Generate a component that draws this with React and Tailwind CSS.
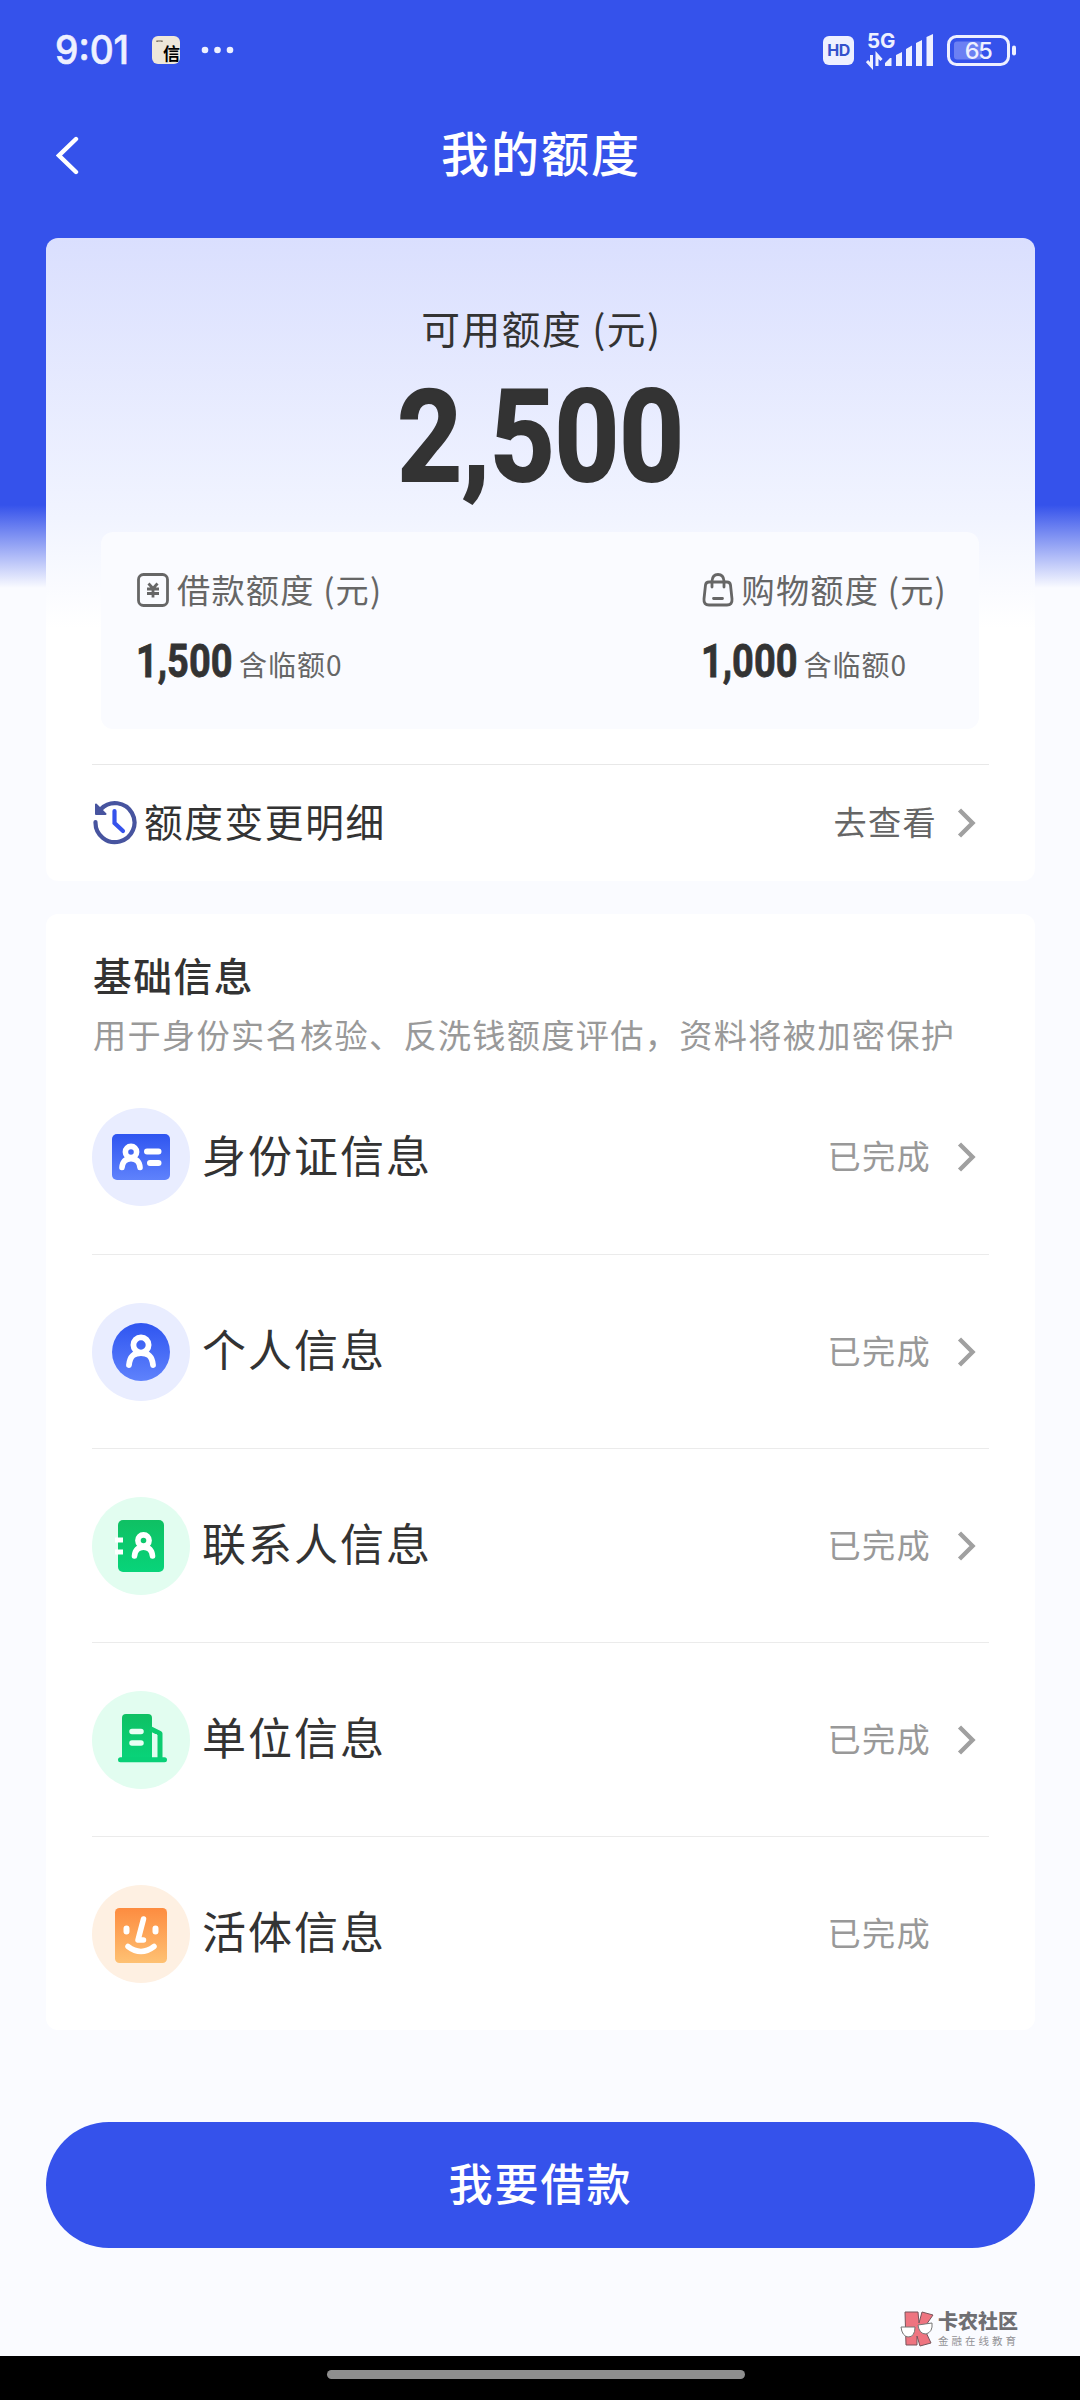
import React from "react";

const Chevron = () => (
  <svg width="24" height="36" viewBox="0 0 24 36" className="shrink-0" fill="none" stroke="#a0a0a0" strokeWidth="4.400">
    <path d="M4.500 5 L17.500 18 L4.500 31" />
  </svg>
);

const Num = ({ children }) => (
  <span className="inline-block origin-left scale-x-[0.825] text-[46px] font-bold leading-[54px] text-[#333] [-webkit-text-stroke:0.8px_#333]">
    {children}
  </span>
);

const Person = () => (
  <g fill="none" stroke="#fff" strokeWidth="5.800" strokeLinecap="round">
    <circle cx="0" cy="-7" r="7.6" />
    <path d="M-12 13 C-11 3 -6 1 0 1 C6 1 11 3 12 13" />
  </g>
);

const SmallPerson = () => (
  <g fill="none" stroke="#fff" strokeWidth="5.600" strokeLinecap="round">
    <circle cx="0" cy="-6" r="5.600" />
    <path d="M-9 9.500 C-8.500 3.500 -5 .8 0 .8 C5 .8 8.500 3.500 9 9.500" />
  </g>
);

const IdIcon = () => (
  <svg width="98" height="98" viewBox="0 0 98 98">
    <defs>
      <linearGradient id="blueA" x1="0" y1="0" x2="0" y2="1">
        <stop offset="0" stopColor="#2f55f0" />
        <stop offset="1" stopColor="#5f82fc" />
      </linearGradient>
    </defs>
    <circle cx="49" cy="49" r="49" fill="#e9edff" />
    <rect x="20" y="26" width="58" height="46" rx="5" fill="url(#blueA)" />
    <g transform="translate(39 50)">
      <SmallPerson />
    </g>
    <path d="M55 43.500H66.500M58 55H66.500" stroke="#fff" strokeWidth="6" strokeLinecap="round" />
  </svg>
);

const UserIcon = () => (
  <svg width="98" height="98" viewBox="0 0 98 98">
    <circle cx="49" cy="49" r="49" fill="#e9edff" />
    <circle cx="49" cy="49" r="29" fill="url(#blueA)" />
    <g transform="translate(49 49)">
      <Person />
    </g>
  </svg>
);

const ContactIcon = () => (
  <svg width="98" height="98" viewBox="0 0 98 98">
    <defs>
      <linearGradient id="greenA" x1="0" y1="0" x2="0" y2="1">
        <stop offset="0" stopColor="#0fc063" />
        <stop offset="1" stopColor="#08d47a" />
      </linearGradient>
    </defs>
    <circle cx="49" cy="49" r="49" fill="#e2fdf0" />
    <rect x="26" y="23" width="46" height="52" rx="5" fill="url(#greenA)" />
    <path d="M23 43H31M23 55H31" stroke="#fff" strokeWidth="5" />
    <g transform="translate(51.500 49.500)">
      <SmallPerson />
    </g>
  </svg>
);

const CompanyIcon = () => (
  <svg width="98" height="98" viewBox="0 0 98 98">
    <circle cx="49" cy="49" r="49" fill="#e2fdf0" />
    <path d="M30 69V27a4 4 0 0 1 4-4H56a4 4 0 0 1 4 4V69Z" fill="url(#greenA)" />
    <path d="M58 37.500 L68 42.500V69" fill="none" stroke="#0ccc70" strokeWidth="5" strokeLinejoin="round" />
    <path d="M28.500 68.800H72.500" stroke="#08d077" strokeWidth="5" strokeLinecap="round" />
    <path d="M40 40.500H49M40 52H49" stroke="#e9fff4" strokeWidth="5.500" strokeLinecap="round" />
    <path d="M62.500 43V66" stroke="#e2fdf0" strokeWidth="4.500" />
  </svg>
);

const FaceIcon = () => (
  <svg width="98" height="98" viewBox="0 0 98 98">
    <defs>
      <linearGradient id="orangeA" x1="0" y1="0" x2="0" y2="1">
        <stop offset="0" stopColor="#fd8c40" />
        <stop offset="1" stopColor="#fec173" />
      </linearGradient>
    </defs>
    <circle cx="49" cy="49" r="49" fill="#fef0e2" />
    <rect x="23" y="23" width="52" height="55" rx="4.500" fill="url(#orangeA)" />
    <g fill="none" stroke="#fff" strokeLinecap="round" strokeLinejoin="round">
      <path d="M34.500 43.500V46.500M63.500 43.500V46.500" strokeWidth="6" />
      <path d="M51.500 34 L46 55H51.500" strokeWidth="5.500" />
      <path d="M36 61.500 Q49 71.500 62 61.500" strokeWidth="5.500" />
    </g>
  </svg>
);

const rows = [
  ["身份证信息", IdIcon, true],
  ["个人信息", UserIcon, true],
  ["联系人信息", ContactIcon, true],
  ["单位信息", CompanyIcon, true],
  ["活体信息", FaceIcon, false],
];

const StatusBar = () => (
  <div className="flex h-[100px] items-center justify-between pl-[55px] pr-[64px] text-[#eef0ff]">
    <div className="flex items-center">
      <div className="w-[77px]">
        <span className="inline-block origin-left scale-x-[0.94] whitespace-nowrap font-['Inter',sans-serif] text-[39.500px] font-medium leading-[50px] [-webkit-text-stroke:0.6px_#eef0ff]">9:01</span>
      </div>
      <div className="ml-5 flex h-[28px] w-[28px] flex-col overflow-hidden rounded-md bg-[#eee7da]">
        <svg width="28" height="6" viewBox="0 0 28 6" fill="none" stroke="#665c50" strokeWidth="1.200">
          <path d="M5 9V5H10V9" />
        </svg>
        <span className="self-end text-[17px] font-bold leading-[21px] text-black">信</span>
      </div>
      <svg width="34" height="8" viewBox="0 0 34 8" className="ml-[21px]" fill="#eef0ff">
        <circle cx="4" cy="4" r="3.300" />
        <circle cx="16.500" cy="4" r="3.300" />
        <circle cx="29" cy="4" r="3.300" />
      </svg>
    </div>
    <div className="flex items-center">
      <div className="flex h-[29px] w-[31px] items-center justify-center rounded-[6px] bg-[#eef0ff] font-['Inter',sans-serif] text-[16px] font-bold leading-5 tracking-[-0.500px] text-[#3552cb]">HD</div>
      <svg width="68" height="44" viewBox="0 -4 68 44" className="mb-1 ml-3" fill="#eef0ff">
        <text x="1" y="18" fontSize="20.500" fontWeight="700" fontFamily="Inter">5G</text>
        <path d="M5.500 25V36L1 31M11 36V25L15.500 30" fill="none" stroke="#eef0ff" strokeWidth="3" />
        <path d="M19 36V33L24 28H25.500V36ZM30 36V25L36 22V36ZM40 36V19L46 15.500V36ZM50 36V13L56 10V36ZM60.500 36V7L67 4V36Z" />
      </svg>
      <svg width="70" height="32" viewBox="0 0 70 32" className="ml-3">
        <rect x="2.500" y="2.500" width="60" height="28" rx="8" fill="none" stroke="#eef0ff" strokeWidth="3" />
        <rect x="8" y="7.500" width="28" height="18" rx="3" fill="#6c80f3" />
        <rect x="66" y="11.500" width="4" height="10" rx="2" fill="#eef0ff" />
        <text x="32" y="25" textAnchor="middle" fill="#eef0ff" fontSize="23.500" letterSpacing="-1.500" fontWeight="500" fontFamily="Inter">65</text>
      </svg>
    </div>
  </div>
);

const YenIcon = () => (
  <svg width="32" height="34" viewBox="0 0 32 34" fill="none" stroke="#666" strokeWidth="2.800">
    <rect x="1.500" y="1.500" width="29" height="31" rx="5" />
    <path d="M11.500 10.500 L16 15.500L20.500 10.500M10 16H22M10 20.500H22M16 15V24.500" />
  </svg>
);

const BagIcon = () => (
  <svg width="32" height="34" viewBox="0 0 32 34" fill="none" stroke="#666" strokeWidth="2.800" strokeLinecap="round">
    <path d="M7 9H25Q28 9 28.500 12L30 26Q30.500 32 25 32H7Q1.500 32 2 26L3.500 12Q4 9 7 9Z" />
    <path d="M10 14V8Q10.500 1.500 16 1.500Q21.500 1.500 22 8V14M11.500 25.500H20.500" />
  </svg>
);

const Quota = ({ icon, label, value }) => (
  <div className="flex flex-col">
    <div className="flex h-[50px] items-center">
      {icon}
      <span className="mb-[3px] ml-2 whitespace-pre text-[33.200px] leading-[50px] tracking-[1.200px] text-[#666]">{label} (元)</span>
    </div>
    <div className="mt-[22px] flex h-[50px] items-center">
      <div className="-ml-px w-[103px] whitespace-nowrap pb-0.5 font-['Roboto']"><Num>{value}</Num></div>
      <span className="whitespace-nowrap pt-[4px] text-[28px] leading-[42px] tracking-[1px] text-[#666]">含临额0</span>
    </div>
  </div>
);

export default function App() {
  return (
    <div className="flex h-[2400px] w-[1080px] flex-col overflow-hidden bg-[#fafbff] bg-[linear-gradient(to_bottom,#3552eb_0px,#3552eb_505px,#fafbff_588px)] font-['Noto_Sans_CJK_SC',sans-serif] text-[#333]">
      <StatusBar />
      <header className="grid h-[138px] grid-cols-[100px_1fr_100px] items-start">
        <svg width="24" height="42" viewBox="0 0 24 42" className="ml-[56px] mt-[35px]" fill="none" stroke="#fff" strokeWidth="4.400" strokeLinecap="round">
          <path d="M20 4L3 20.500L20 37" />
        </svg>
        <h1 className="mt-[15px] pl-[2px] text-center text-[48px] font-medium leading-[72px] tracking-[2px] text-white">我的额度</h1>
      </header>

      <section className="ml-[46px] mr-[45px] h-[643px] shrink-0 rounded-xl bg-white bg-[linear-gradient(to_bottom,#dadffe_0px,#f1f4ff_280px,#ffffff_390px)] px-[46px]">
        <div className="flex h-[294px] flex-col items-center pt-[60px]">
          <div className="whitespace-pre pl-[2px] text-[38.700px] leading-[58px] tracking-[1.500px]">可用额度 (元)</div>
          <div className="mt-[16px] scale-x-[0.882] whitespace-nowrap font-['Roboto'] text-[128px] font-bold leading-[130px] [-webkit-text-stroke:2px_#333]">2,500</div>
        </div>
        <div className="ml-[9px] mr-[10px] flex h-[197px] justify-between rounded-xl bg-[#fafbff] pl-[36px] pr-[32px] pt-[33px]">
          <Quota icon={<YenIcon />} label="借款额度" value="1,500" />
          <Quota icon={<BagIcon />} label="购物额度" value="1,000" />
        </div>
        <div className="mt-[35px] flex h-[116px] items-center border-t border-[#e8e8e8]">
          <svg width="46" height="46" viewBox="0 0 46 46" fill="none" strokeWidth="4.200">
            <path d="M3.500 22 A19.500 19.500 0 1 0 9 9" stroke="#47549f" strokeLinecap="round" />
            <path d="M4 4.500V14H13.500Z" fill="#47549f" stroke="#47549f" strokeWidth="2" strokeLinejoin="round" />
            <path d="M22.500 11V23L31 31" stroke="#3552eb" strokeLinecap="round" />
          </svg>
          <span className="mb-[5px] ml-[6px] text-[38.700px] leading-[58px] tracking-[1.600px]">额度变更明细</span>
          <span className="mb-[3px] ml-auto mr-[18px] text-[33.200px] leading-[50px] tracking-[1.300px] text-[#666]">去查看</span>
          <Chevron />
          <div className="w-[10px]" />
        </div>
      </section>

      <section className="ml-[46px] mr-[45px] mt-[33px] h-[1116px] shrink-0 rounded-xl bg-white px-[46px] pt-[31px]">
        <h2 className="pl-px text-[38.700px] font-medium leading-[58px] tracking-[1.600px]">基础信息</h2>
        <p className="mt-[6px] whitespace-nowrap pl-px text-[33.200px] leading-[50px] tracking-[1.300px] text-[#999]">用于身份实名核验、反洗钱额度评估，资料将被加密保护</p>
        <div className="mt-px">
          {rows.map(([label, Icon, arrow], i) => (
            <div key={label} className={i ? "flex h-[194px] items-center border-t border-[#ebebeb]" : "flex h-[194px] items-center"}>
              <Icon />
              <span className="mb-[7px] ml-[12px] text-[44px] leading-[66px] tracking-[2px]">{label}</span>
              <span className="mb-[4px] ml-auto mr-[24px] text-[33.200px] leading-[50px] tracking-[1.300px] text-[#999]">已完成</span>
              {arrow ? <Chevron /> : <div className="w-6" />}
              <div className="w-[10px]" />
            </div>
          ))}
        </div>
      </section>

      <button className="ml-[46px] mr-[45px] mt-[92px] h-[126px] shrink-0 rounded-full bg-[#3552eb] pb-1.5 text-[44px] font-medium tracking-[2px] text-white">我要借款</button>

      <footer className="mt-auto">
        <div className="mb-[8px] ml-[900px] flex items-center">
          <svg width="34" height="36" viewBox="0 0 34 36">
            <path d="M5 1H18L19 12L22 1L33 4L24 17L31 32L20 35L17 25V34H6Z" fill="#ee7480" stroke="#77555c" strokeWidth="1" />
            <path d="M1 16H15Q15 26 8 26Q2 25 1 16ZM18 14L32 12Q33 21 26 23Q19 23 18 14Z" fill="#fff" stroke="#777" strokeWidth="1" />
          </svg>
          <div className="ml-1 flex flex-col">
            <span className="whitespace-nowrap text-[20px] font-black leading-[24px] text-[#6f6f73]">卡农社区</span>
            <span className="whitespace-nowrap text-[10.500px] leading-[15px] tracking-[3px] text-[#929296]">金融在线教育</span>
          </div>
        </div>
        <div className="flex h-[44px] bg-black pl-[327px] pt-[14px]">
          <div className="h-[9px] w-[418px] rounded-full bg-[#8e8e8e]" />
        </div>
      </footer>
    </div>
  );
}
